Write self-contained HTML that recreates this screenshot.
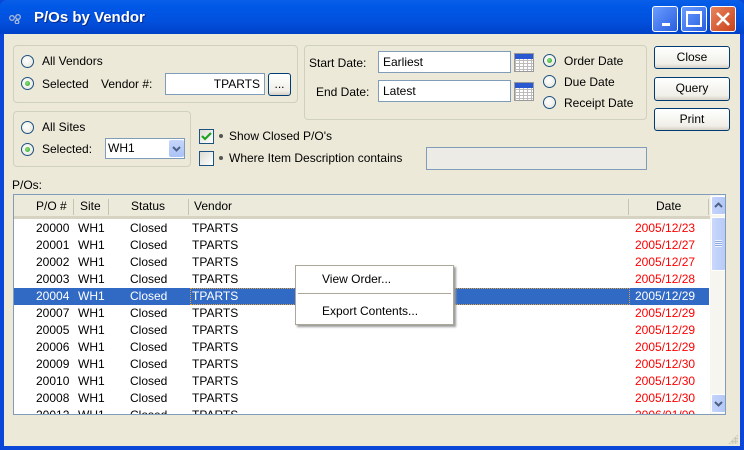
<!DOCTYPE html>
<html><head><meta charset="utf-8"><style>
*{margin:0;padding:0;box-sizing:border-box}
body{width:744px;height:450px;overflow:hidden;font-family:"Liberation Sans",sans-serif;font-size:12px;color:#000;background:#0a46d8;position:relative}
.a{position:absolute}
#title{left:0;top:0;width:744px;height:34px;background:linear-gradient(#0a5fe8,#0058e6 20%,#0251de 60%,#0041c8);border-radius:7px 7px 0 0}
#body{left:4px;top:34px;width:736px;height:412px;background:#ece9d8}
.grp{border:1px solid #d0d0bf;border-radius:4px}
.rad{width:13px;height:13px;border-radius:50%;border:1px solid #1c5180;background:radial-gradient(circle at 40% 40%,#fff,#e4e2d8)}
.rad.on::after{content:"";position:absolute;left:3px;top:3px;width:5px;height:5px;border-radius:50%;background:radial-gradient(circle at 40% 40%,#8ee27c,#21a121)}
.inp{background:#fff;border:1px solid #7f9db9;height:22px;line-height:20px;padding:0 4px}
.btn{border:1px solid #003c74;border-radius:3px;background:linear-gradient(#fff,#f0efe8 80%,#d6d0c5);text-align:center;line-height:21px}
.chk{width:13px;height:13px;border:1px solid #1c5180;background:linear-gradient(135deg,#dcdcd4,#fff)}
.cal{width:20px;height:19px;background:repeating-linear-gradient(90deg,#bbb 0 1px,transparent 1px 4px),repeating-linear-gradient(#bbb 0 1px,#fff 1px 3px);border:1px solid #999}
.cal::before{content:"";position:absolute;left:0;top:0;width:18px;height:5px;background:#2a58d0}
.row{position:absolute;left:0;width:695px;height:17px;line-height:17px}
.row span{position:absolute}
.d{color:#f00}
.hdr span{position:absolute;top:0;line-height:22px}
.tb{position:absolute;top:6px;width:26px;height:26px;border:1px solid #fff;border-radius:3px;background:linear-gradient(135deg,#6a9cff,#2a5fe0)}
</style></head><body>
<div id="title" class="a"></div>
<div class="a" style="left:9px;top:13px;width:12px;height:10px">
<svg width="12" height="10"><circle cx="3" cy="4" r="2.3" fill="none" stroke="#a9b8d8" stroke-width="1.3"/><circle cx="9" cy="3" r="2.3" fill="none" stroke="#a9b8d8" stroke-width="1.3"/><circle cx="8" cy="8" r="1.8" fill="none" stroke="#a9b8d8" stroke-width="1.3"/></svg></div>
<div class="a" style="left:34px;top:9px;color:#fff;font-weight:bold;font-size:15px;text-shadow:1px 1px #0a2a8a">P/Os by Vendor</div>
<div class="tb" style="left:652px"><div class="a" style="left:9px;top:16px;width:8px;height:3px;background:#fff"></div></div>
<div class="tb" style="left:681px"><div class="a" style="left:4px;top:4px;width:16px;height:16px;border:2px solid #fff;border-top-width:3px"></div></div>
<div class="tb" style="left:710px;background:linear-gradient(135deg,#e8845c,#c8421c)"><svg class="a" style="left:4px;top:4px" width="16" height="16"><path d="M2 2L14 14M14 2L2 14" stroke="#fff" stroke-width="2.6"/></svg></div>
<div id="body" class="a"></div>

<div class="a grp" style="left:13px;top:45px;width:285px;height:58px"></div>
<div class="a rad" style="left:21px;top:55px"></div><div class="a" style="left:42px;top:54px">All Vendors</div>
<div class="a rad on" style="left:21px;top:77px"></div><div class="a" style="left:42px;top:77px">Selected</div>
<div class="a" style="left:101px;top:77px">Vendor #:</div>
<div class="a inp" style="left:165px;top:73px;width:100px;text-align:right">TPARTS</div>
<div class="a btn" style="left:268px;top:73px;width:23px;height:23px;line-height:20px">...</div>

<div class="a grp" style="left:13px;top:111px;width:178px;height:56px"></div>
<div class="a rad" style="left:21px;top:121px"></div><div class="a" style="left:42px;top:120px">All Sites</div>
<div class="a rad on" style="left:21px;top:143px"></div><div class="a" style="left:42px;top:142px">Selected:</div>
<div class="a inp" style="left:105px;top:138px;width:80px;height:21px;line-height:19px;padding-left:2px">WH1</div>
<div class="a" style="left:169px;top:140px;width:15px;height:17px;background:linear-gradient(#c6d6fb,#a9c2f6);border-radius:2px"><svg width="15" height="17"><path d="M4 7l3.5 3.5L11 7" stroke="#4d6185" stroke-width="2" fill="none"/></svg></div>

<div class="a grp" style="left:304px;top:45px;width:343px;height:75px"></div>
<div class="a" style="left:309px;top:56px">Start Date:</div>
<div class="a inp" style="left:378px;top:51px;width:133px">Earliest</div>
<div class="a cal" style="left:514px;top:53px"></div>
<div class="a" style="left:316px;top:85px">End Date:</div>
<div class="a inp" style="left:378px;top:80px;width:133px">Latest</div>
<div class="a cal" style="left:514px;top:82px"></div>
<div class="a rad on" style="left:543px;top:54px"></div><div class="a" style="left:564px;top:54px">Order Date</div>
<div class="a rad" style="left:543px;top:75px"></div><div class="a" style="left:564px;top:75px">Due Date</div>
<div class="a rad" style="left:543px;top:96px"></div><div class="a" style="left:564px;top:96px">Receipt Date</div>

<div class="a btn" style="left:654px;top:46px;width:76px;height:23px">Close</div>
<div class="a btn" style="left:654px;top:77px;width:76px;height:24px">Query</div>
<div class="a btn" style="left:654px;top:108px;width:76px;height:23px">Print</div>

<div class="a chk" style="left:199px;top:129px;width:15px;height:15px"><svg width="13" height="13"><path d="M2 6l3 3 6-6" stroke="#21a121" stroke-width="2.2" fill="none"/></svg></div>
<div class="a" style="left:219px;top:134px;width:4px;height:4px;border-radius:50%;background:#555"></div>
<div class="a" style="left:229px;top:129px">Show Closed P/O's</div>
<div class="a chk" style="left:199px;top:151px;width:15px;height:15px"></div>
<div class="a" style="left:219px;top:156px;width:4px;height:4px;border-radius:50%;background:#555"></div>
<div class="a" style="left:229px;top:151px">Where Item Description contains</div>
<div class="a" style="left:426px;top:147px;width:221px;height:23px;background:#ecebe6;border:1px solid #7f9db9"></div>

<div class="a" style="left:12px;top:178px">P/Os:</div>
<div class="a" style="left:13px;top:194px;width:713px;height:221px;background:#fff;border:1px solid #7f9db9;overflow:hidden">
 <div class="a hdr" style="left:0;top:0;width:696px;height:24px;background:#ebeadb;border-bottom:3px solid #d6d3c2">
  <span style="left:22px">P/O #</span><span style="left:66px">Site</span><span style="left:117px">Status</span><span style="left:180px">Vendor</span><span style="left:642px">Date</span>
  <div class="a" style="left:59px;top:4px;width:1px;height:16px;background:#c7c5b2"></div>
  <div class="a" style="left:94px;top:4px;width:1px;height:16px;background:#c7c5b2"></div>
  <div class="a" style="left:174px;top:4px;width:1px;height:16px;background:#c7c5b2"></div>
  <div class="a" style="left:614px;top:4px;width:1px;height:16px;background:#c7c5b2"></div>
  <div class="a" style="left:694px;top:4px;width:1px;height:16px;background:#c7c5b2"></div>
 </div>
 <div class="a" style="left:0;top:25px;width:696px;height:200px">
  <div class="row" style="top:0"><span style="left:22px">20000</span><span style="left:64px">WH1</span><span style="left:116px">Closed</span><span style="left:178px">TPARTS</span><span class="d" style="left:621px">2005/12/23</span></div>
  <div class="row" style="top:17px"><span style="left:22px">20001</span><span style="left:64px">WH1</span><span style="left:116px">Closed</span><span style="left:178px">TPARTS</span><span class="d" style="left:621px">2005/12/27</span></div>
  <div class="row" style="top:34px"><span style="left:22px">20002</span><span style="left:64px">WH1</span><span style="left:116px">Closed</span><span style="left:178px">TPARTS</span><span class="d" style="left:621px">2005/12/27</span></div>
  <div class="row" style="top:51px"><span style="left:22px">20003</span><span style="left:64px">WH1</span><span style="left:116px">Closed</span><span style="left:178px">TPARTS</span><span class="d" style="left:621px">2005/12/28</span></div>
  <div class="row" style="top:68px;background:#316ac5;color:#fff"><span style="left:22px">20004</span><span style="left:64px">WH1</span><span style="left:116px">Closed</span><span style="left:176px;top:0;width:440px;height:17px;border:1px dotted #e0a040;padding-left:1px;line-height:15px">TPARTS</span><span style="left:621px">2005/12/29</span></div>
  <div class="row" style="top:85px"><span style="left:22px">20007</span><span style="left:64px">WH1</span><span style="left:116px">Closed</span><span style="left:178px">TPARTS</span><span class="d" style="left:621px">2005/12/29</span></div>
  <div class="row" style="top:102px"><span style="left:22px">20005</span><span style="left:64px">WH1</span><span style="left:116px">Closed</span><span style="left:178px">TPARTS</span><span class="d" style="left:621px">2005/12/29</span></div>
  <div class="row" style="top:119px"><span style="left:22px">20006</span><span style="left:64px">WH1</span><span style="left:116px">Closed</span><span style="left:178px">TPARTS</span><span class="d" style="left:621px">2005/12/29</span></div>
  <div class="row" style="top:136px"><span style="left:22px">20009</span><span style="left:64px">WH1</span><span style="left:116px">Closed</span><span style="left:178px">TPARTS</span><span class="d" style="left:621px">2005/12/30</span></div>
  <div class="row" style="top:153px"><span style="left:22px">20010</span><span style="left:64px">WH1</span><span style="left:116px">Closed</span><span style="left:178px">TPARTS</span><span class="d" style="left:621px">2005/12/30</span></div>
  <div class="row" style="top:170px"><span style="left:22px">20008</span><span style="left:64px">WH1</span><span style="left:116px">Closed</span><span style="left:178px">TPARTS</span><span class="d" style="left:621px">2005/12/30</span></div>
  <div class="row" style="top:187px"><span style="left:22px">20012</span><span style="left:64px">WH1</span><span style="left:116px">Closed</span><span style="left:178px">TPARTS</span><span class="d" style="left:621px">2006/01/09</span></div>
 </div>
 <div class="a" style="left:696px;top:0;width:16px;height:219px;background:#f6f5ef"></div>
 <div class="a" style="left:697px;top:1px;width:15px;height:19px;border-radius:2px;background:linear-gradient(90deg,#c3d3fd,#b4c8f5);border:1px solid #fff"><svg width="13" height="17"><path d="M3 10l3.5-3.5L10 10" stroke="#4d6185" stroke-width="2" fill="none"/></svg></div>
 <div class="a" style="left:697px;top:22px;width:15px;height:54px;border-radius:2px;background:linear-gradient(90deg,#c8d7fc,#b8cbf7);border:1px solid #fff"><div class="a" style="left:3px;top:22px;width:7px;height:7px;background:repeating-linear-gradient(#eef3ff 0 1px,#8ea8e0 1px 2px)"></div></div>
 <div class="a" style="left:697px;top:199px;width:15px;height:19px;border-radius:2px;background:linear-gradient(90deg,#c3d3fd,#b4c8f5);border:1px solid #fff"><svg width="13" height="17"><path d="M3 7l3.5 3.5L10 7" stroke="#4d6185" stroke-width="2" fill="none"/></svg></div>
</div>

<div class="a" style="left:295px;top:265px;width:159px;height:60px;background:#fff;border:1px solid #aca899;box-shadow:2px 2px 2px #999">
 <div class="a" style="left:26px;top:6px">View Order...</div>
 <div class="a" style="left:2px;top:27px;width:153px;height:1px;background:#aca899"></div>
 <div class="a" style="left:26px;top:38px">Export Contents...</div>
</div>
<div class="a" style="left:728px;top:434px;width:10px;height:10px;background:radial-gradient(circle,#c4c1b0 1px,transparent 1.5px) 0 0/3px 3px;clip-path:polygon(100% 0,100% 100%,0 100%)"></div>
</body></html>
